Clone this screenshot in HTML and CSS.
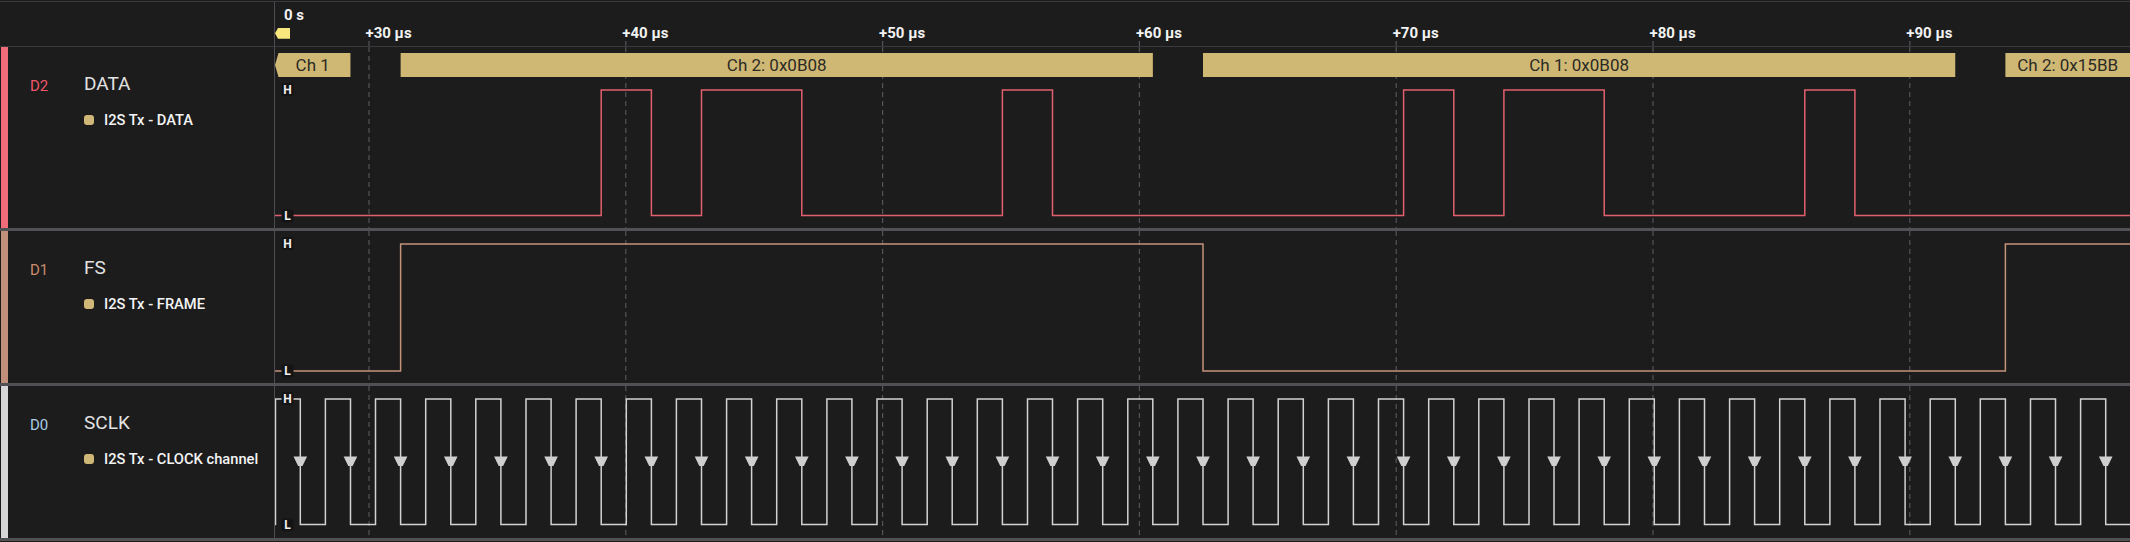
FILE: index.html
```html
<!DOCTYPE html>
<html lang="en">
<head>
  <meta charset="UTF-8">
  <meta name="viewport" content="width=device-width, initial-scale=1.0">
  <title>Logic Analyzer - I2S Tx</title>
  <link rel="stylesheet" href="styles.css">
</head>
<body>

  <div class="viewer">
    <div class="row header">
      <div class="side"></div>
      <div class="plot"><svg id="ruler" width="1855" height="44"></svg></div>
    </div>

    <div class="row channel tall">
      <div class="side">
        <span class="bar bar-data"></span>
        <span class="ch-id id-data">D2</span>
        <div class="ch-info">
          <div class="ch-name">DATA</div>
          <div class="ch-analyzer"><span class="dot"></span>I2S Tx - DATA</div>
        </div>
      </div>
      <div class="plot"><svg id="traceData" width="1855" height="181"></svg></div>
    </div>

    <div class="row channel">
      <div class="side">
        <span class="bar bar-fs"></span>
        <span class="ch-id id-fs">D1</span>
        <div class="ch-info">
          <div class="ch-name">FS</div>
          <div class="ch-analyzer"><span class="dot"></span>I2S Tx - FRAME</div>
        </div>
      </div>
      <div class="plot"><svg id="traceFs" width="1855" height="152"></svg></div>
    </div>

    <div class="row channel">
      <div class="side">
        <span class="bar bar-clk"></span>
        <span class="ch-id id-clk">D0</span>
        <div class="ch-info">
          <div class="ch-name">SCLK</div>
          <div class="ch-analyzer"><span class="dot"></span>I2S Tx - CLOCK channel</div>
        </div>
      </div>
      <div class="plot"><svg id="traceClk" width="1855" height="152"></svg></div>
    </div>
  </div>

  <script>
    const W = 1855;
    const T0 = 25.3;      // first falling clock edge
    const P = 50.15;      // clock period in px
    const HALF = P / 2;
    const fall = k => T0 + P * k;

    const TICK0 = 94;
    const TICK_STEP = 256.8;
    const tickLabels = [30, 40, 50, 60, 70, 80, 90];

    const NS = 'http://www.w3.org/2000/svg';

    function el(parent, tag, attrs, text) {
      const node = document.createElementNS(NS, tag);
      for (const key in attrs) node.setAttribute(key, attrs[key]);
      if (text !== undefined) node.textContent = text;
      parent.appendChild(node);
      return node;
    }

    function grid(svg, y1, y2) {
      tickLabels.forEach((_, i) => {
        const x = TICK0 + TICK_STEP * i;
        el(svg, 'line', { x1: x, x2: x, y1: y1, y2: y2, class: 'grid' });
      });
    }

    function signal(svg, cls, edges, hi, lo) {
      let level = 0;
      let d = `M0,${lo}`;
      edges.forEach(x => {
        level = 1 - level;
        d += ` H${x.toFixed(1)} V${level ? hi : lo}`;
      });
      d += ` H${W}`;
      el(svg, 'path', { d: d, class: 'wave ' + cls });
    }

    function levelTag(svg, text, y) {
      el(svg, 'rect', { x: 6.5, y: y - 6.5, width: 12, height: 13, rx: 2, class: 'lvl-bg' });
      el(svg, 'text', { x: 12.5, y: y + 4, class: 'lvl' }, text);
    }

    // Ruler
    const ruler = document.getElementById('ruler');
    grid(ruler, 39, 44);
    el(ruler, 'text', { x: 9, y: 17.5, class: 'time' }, '0 s');
    el(ruler, 'polygon', { points: '0,31.3 3,26 15,26 15,36.7 3,36.7', class: 'marker' });
    tickLabels.forEach((t, i) => {
      el(ruler, 'text', { x: TICK0 + TICK_STEP * i - 3.5, y: 35.5, class: 'time' }, `+${t} µs`);
    });

    // DATA
    const data = document.getElementById('traceData');
    grid(data, 0, 181);
    const frames = [
      { from: -10, to: fall(1), text: 'Ch 1' },
      { from: fall(2), to: fall(17), text: 'Ch 2: 0x0B08' },
      { from: fall(18), to: fall(33), text: 'Ch 1: 0x0B08' },
      { from: fall(34), to: fall(49), text: 'Ch 2: 0x15BB' },
    ];
    frames.forEach(f => {
      const x1 = Math.max(f.from, 0);
      const x2 = Math.min(f.to, W);
      if (f.from < 0) {
        el(data, 'polygon', { points: `3.5,6 ${x2},6 ${x2},30 3.5,30 0,18`, class: 'frame' });
      } else {
        el(data, 'rect', { x: x1, y: 6, width: x2 - x1, height: 24, class: 'frame' });
      }
      el(data, 'text', { x: (x1 + x2) / 2, y: 23.7, class: 'frame-text' }, f.text);
    });
    const dataEdges = [6, 7, 8, 10, 14, 15, 22, 23, 24, 26, 30, 31].map(fall);
    signal(data, 'wave-data', dataEdges, 43, 168.5);
    levelTag(data, 'H', 42.5);
    levelTag(data, 'L', 169);

    // FS
    const fs = document.getElementById('traceFs');
    grid(fs, 0, 152);
    signal(fs, 'wave-fs', [2, 18, 34].map(fall), 13, 140);
    levelTag(fs, 'H', 12.5);
    levelTag(fs, 'L', 140);

    // SCLK
    const clk = document.getElementById('traceClk');
    grid(clk, 0, 152);
    const clkEdges = [0.5];
    for (let k = 0; fall(k) < W; k++) {
      clkEdges.push(fall(k));
      if (fall(k) + HALF < W) clkEdges.push(fall(k) + HALF);
    }
    signal(clk, 'wave-clk', clkEdges, 13, 138.5);
    for (let k = 0; fall(k) < W; k++) {
      const x = fall(k);
      el(clk, 'polygon', { points: `${x - 6.8},70.5 ${x + 6.8},70.5 ${x + 2.2},80 ${x - 2.2},80`, class: 'edge' });
    }
    levelTag(clk, 'H', 12.5);
    levelTag(clk, 'L', 139);
  </script>
</body>
</html>
```

FILE: styles.css
```css
body {
  margin: 0;
  background: #1c1c1c;
  font-family: Roboto, "Liberation Sans", sans-serif;
  overflow: hidden;
}
.viewer {
  width: 2130px;
}
.row {
  display: flex;
}
.header {
  margin-top: 1px;
  height: 44px;
  border-top: 1px solid #3a3a3e;
  border-bottom: 1px solid #3a3a3e;
}
.side {
  width: 273px;
  padding-left: 1px;
  flex-shrink: 0;
  display: flex;
  border-right: 1px solid #4c4c51;
}
.plot {
  flex: 1;
  overflow: hidden;
}
.plot svg {
  display: block;
}
.channel {
  height: 152px;
  border-bottom: 3px solid #505055;
}
.channel.tall {
  height: 181px;
}

/* channel labels */
.bar {
  width: 7px;
  flex-shrink: 0;
}
.bar-data { background: #f26b79; }
.bar-fs { background: #c0907a; }
.bar-clk { background: #d6d6d6; }

.ch-id {
  width: 54px;
  margin-left: 22px;
  padding-top: 28px;
  font-size: 15px;
  line-height: 22px;
}
.id-data { color: #f2566a; }
.id-fs { color: #c98d6c; }
.id-clk { color: #a9cfe8; }

.ch-info {
  padding-top: 26px;
}
.ch-name {
  font-size: 19px;
  line-height: 22px;
  color: #e2e2e2;
}
.ch-analyzer {
  display: flex;
  align-items: center;
  margin-top: 16px;
  font-size: 14.7px;
  line-height: 18px;
  font-weight: 500;
  color: #f4f4f4;
}
.dot {
  width: 10px;
  height: 10px;
  border-radius: 3px;
  background: #cfb877;
  margin-right: 10px;
}

/* waveform canvas */
.grid {
  stroke: #545458;
  stroke-width: 1.2;
  stroke-dasharray: 5 4;
}
.time {
  fill: #f2f2f2;
  font-family: Roboto, "Liberation Sans", sans-serif;
  font-size: 15px;
  font-weight: 700;
}
.marker {
  fill: #f7e77c;
}
.frame {
  fill: #cfb874;
}
.frame-text {
  fill: #2c2a24;
  font-family: Roboto, "Liberation Sans", sans-serif;
  font-size: 17px;
  text-anchor: middle;
}
.wave {
  fill: none;
  stroke-width: 1.5;
}
.wave-data { stroke: #e2606d; }
.wave-fs { stroke: #c4937b; }
.wave-clk { stroke: #d2d2d2; }
.edge {
  fill: #cfcfcf;
}
.lvl-bg {
  fill: #141414;
}
.lvl {
  fill: #f2f2f2;
  font-family: Roboto, "Liberation Sans", sans-serif;
  font-size: 12px;
  font-weight: 700;
  text-anchor: middle;
}
```
